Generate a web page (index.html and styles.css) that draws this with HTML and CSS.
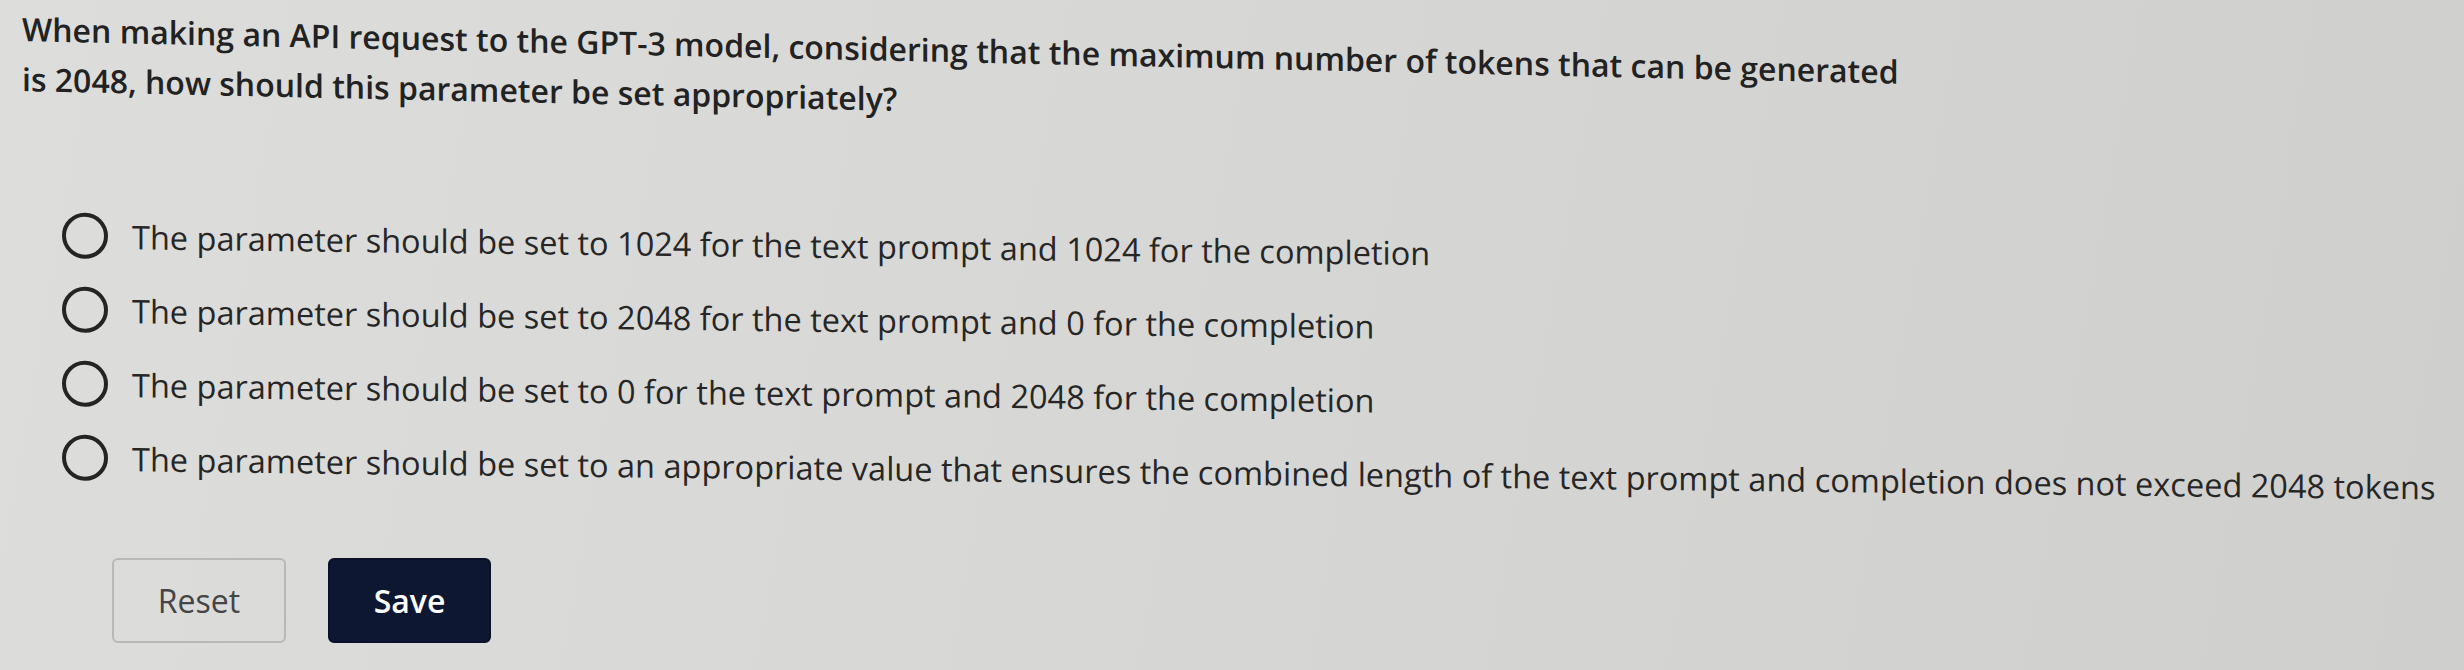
FILE: index.html
```html
<!DOCTYPE html>
<html lang="en">
<head>
<meta charset="utf-8">
<title>Question</title>
<link rel="stylesheet" href="styles.css">
</head>
<body>
<main class="quiz">
  <p class="question">When making an API request to the GPT-3 model, considering that the maximum number of tokens that can be generated is 2048, how should this parameter be set appropriately?</p>
  <ul class="options">
    <li class="option"><span class="radio"></span><span class="label">The parameter should be set to 1024 for the text prompt and 1024 for the completion</span></li>
    <li class="option"><span class="radio"></span><span class="label">The parameter should be set to 2048 for the text prompt and 0 for the completion</span></li>
    <li class="option"><span class="radio"></span><span class="label">The parameter should be set to 0 for the text prompt and 2048 for the completion</span></li>
    <li class="option"><span class="radio"></span><span class="label">The parameter should be set to an appropriate value that ensures the combined length of the text prompt and completion does not exceed 2048 tokens</span></li>
  </ul>
  <div class="actions">
    <button class="btn btn-reset" type="button">Reset</button>
    <button class="btn btn-save" type="button">Save</button>
  </div>
</main>
</body>
</html>
```
FILE: styles.css
```css
html, body {
  margin: 0;
  padding: 0;
}
body {
  width: 2464px;
  height: 670px;
  overflow: hidden;
  background: linear-gradient(100deg, #dddddb 0%, #d7d7d5 45%, #cfcfcd 100%);
  font-family: "Open Sans", "Noto Sans", sans-serif;
  color: #2b2b2b;
}
.quiz {
  padding: 0 0 0 22px;
}
.question {
  margin: 4px 0 0 0;
  width: 1900px;
  font-size: 32px;
  font-weight: 600;
  line-height: 50px;
  color: #222222;
  transform: skewY(1.3deg);
  transform-origin: 0 0;
}
.options {
  list-style: none;
  margin: 94px 0 0 0;
  padding: 0;
  transform: skewY(0.7deg);
  transform-origin: 0 50%;
}
.option {
  display: flex;
  align-items: center;
  height: 74px;
}
.radio {
  box-sizing: border-box;
  width: 46px;
  height: 46px;
  border: 4px solid #242424;
  border-radius: 50%;
  margin-left: 40px;
  margin-right: 24px;
  flex: none;
}
.label {
  font-size: 32.5px;
  font-weight: 500;
  white-space: nowrap;
  color: #262626;
}
.actions {
  display: flex;
  gap: 42px;
  margin: 64px 0 0 90px;
}
.btn {
  height: 85px;
  border-radius: 6px;
  font-family: "Open Sans", "Noto Sans", sans-serif;
  font-size: 32px;
  padding: 0;
}
.btn-reset {
  width: 174px;
  background: transparent;
  border: 2px solid #b8b8b6;
  color: #454545;
  font-weight: 400;
}
.btn-save {
  width: 163px;
  background: #0e1731;
  border: 2px solid #0a1128;
  color: #ffffff;
  font-weight: 600;
}
```
